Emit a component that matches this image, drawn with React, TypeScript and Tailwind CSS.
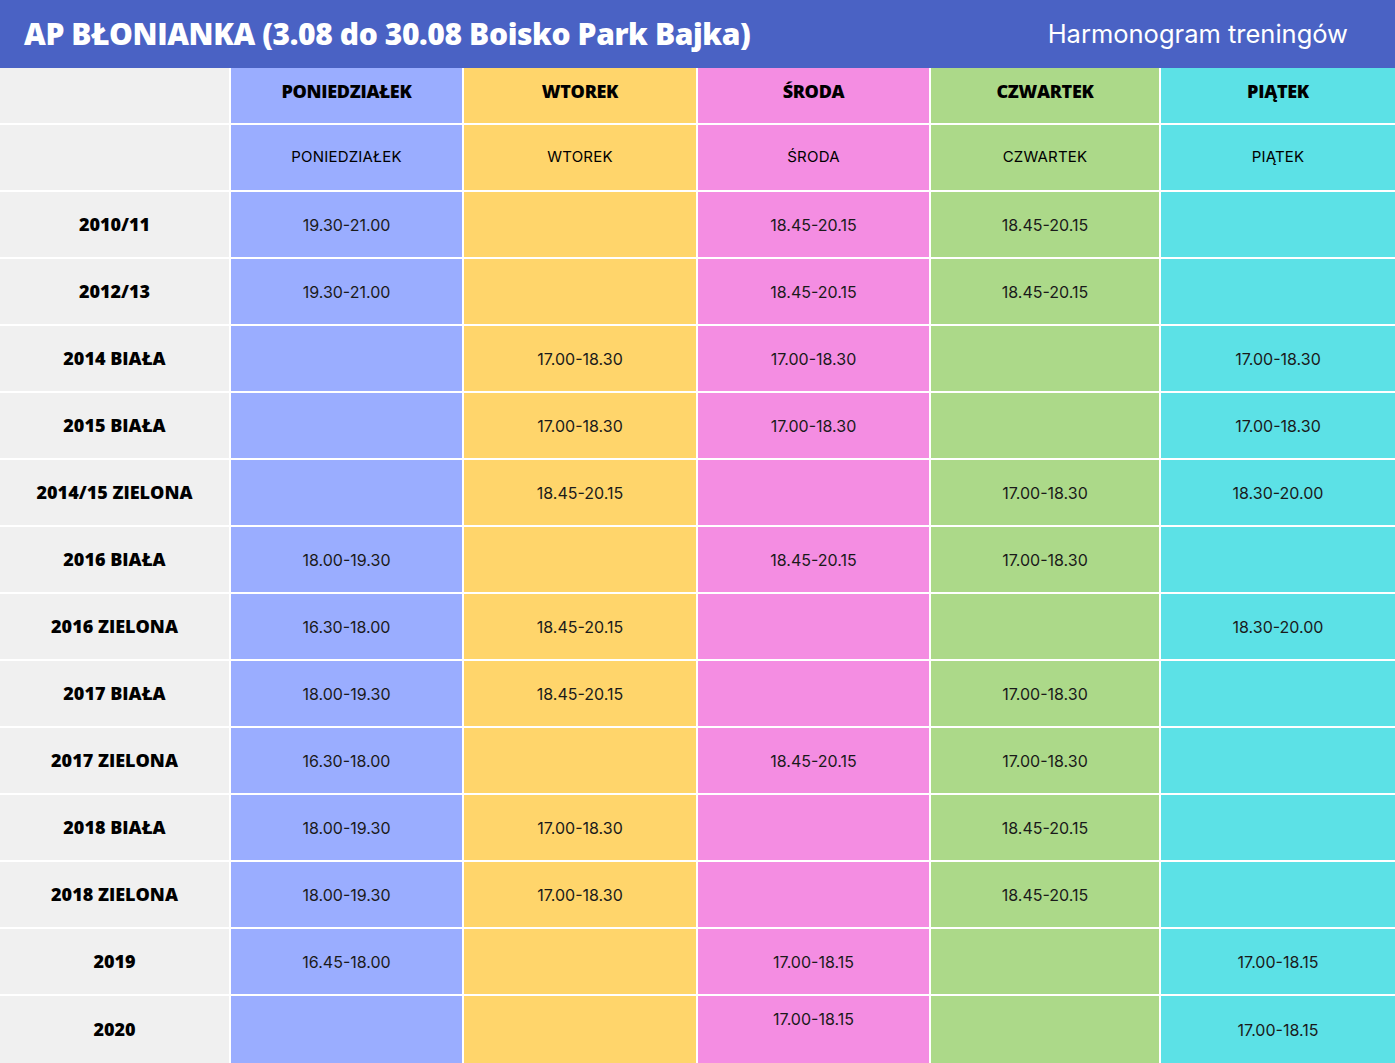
import React from "react";

const colBg = [
  "bg-[#9aadff]",
  "bg-[#ffd56b]",
  "bg-[#f48de2]",
  "bg-[#acd989]",
  "bg-[#5ce1e6]",
];

const days = ["PONIEDZIAŁEK", "WTOREK", "ŚRODA", "CZWARTEK", "PIĄTEK"];

const rows: string[][] = [
  ["2010/11", "19.30-21.00", "", "18.45-20.15", "18.45-20.15", ""],
  ["2012/13", "19.30-21.00", "", "18.45-20.15", "18.45-20.15", ""],
  ["2014 BIAŁA", "", "17.00-18.30", "17.00-18.30", "", "17.00-18.30"],
  ["2015 BIAŁA", "", "17.00-18.30", "17.00-18.30", "", "17.00-18.30"],
  ["2014/15 ZIELONA", "", "18.45-20.15", "", "17.00-18.30", "18.30-20.00"],
  ["2016 BIAŁA", "18.00-19.30", "", "18.45-20.15", "17.00-18.30", ""],
  ["2016 ZIELONA", "16.30-18.00", "18.45-20.15", "", "", "18.30-20.00"],
  ["2017 BIAŁA", "18.00-19.30", "18.45-20.15", "", "17.00-18.30", ""],
  ["2017 ZIELONA", "16.30-18.00", "", "18.45-20.15", "17.00-18.30", ""],
  ["2018 BIAŁA", "18.00-19.30", "17.00-18.30", "", "18.45-20.15", ""],
  ["2018 ZIELONA", "18.00-19.30", "17.00-18.30", "", "18.45-20.15", ""],
  ["2019", "16.45-18.00", "", "17.00-18.15", "", "17.00-18.15"],
  ["2020", "", "", "17.00-18.15", "", "17.00-18.15"],
];

export default function App() {
  return (
    <div className="w-[1395px] h-[1063px] overflow-hidden bg-white">
      <div className="h-[68px] bg-[#4a62c4] flex items-center justify-between pl-[24px] pr-[47px]">
        <div className="text-white text-[30px] font-extrabold tracking-[-0.4px] leading-none font-['Open_Sans','DejaVu_Sans',sans-serif]">
          AP BŁONIANKA (3.08 do 30.08 Boisko Park Bajka)
        </div>
        <div className="text-white text-[25.5px] font-normal leading-none font-['Inter','Liberation_Sans',sans-serif]">
          Harmonogram treningów
        </div>
      </div>
      <div className="grid grid-cols-[229px_231px_232px_231px_228px_1fr] gap-[2px] bg-white">
        <div className="h-[55px] bg-[#f0f0f0]" />
        {days.map((d, i) => (
          <div
            key={d}
            className={`h-[55px] ${colBg[i]} flex items-center justify-center pb-[9px] text-[18px] font-extrabold text-black tracking-[-0.3px] font-['Open_Sans','DejaVu_Sans',sans-serif]`}
          >
            {d}
          </div>
        ))}
        <div className="h-[65px] bg-[#f0f0f0]" />
        {days.map((d, i) => (
          <div
            key={d + "2"}
            className={`h-[65px] ${colBg[i]} flex items-center justify-center text-[15px] tracking-[0.2px] text-black font-['Inter','Liberation_Sans',sans-serif]`}
          >
            {d}
          </div>
        ))}
        {rows.map((r, ri) => {
          const last = ri === rows.length - 1;
          const h = last ? "h-[67px]" : "h-[65px]";
          return (
            <React.Fragment key={r[0]}>
              <div
                className={`${h} bg-[#f0f0f0] flex items-center justify-center text-[18px] font-extrabold text-black font-['Open_Sans','DejaVu_Sans',sans-serif]`}
              >
                {r[0]}
              </div>
              {r.slice(1).map((c, ci) => (
                <div
                  key={ci}
                  className={`${h} ${colBg[ci]} flex items-center justify-center text-[16px] text-[#1a1a1a] font-['Inter','Liberation_Sans',sans-serif] ${
                    last && ci === 2 ? "pb-[22px]" : ""
                  }`}
                >
                  {c}
                </div>
              ))}
            </React.Fragment>
          );
        })}
      </div>
    </div>
  );
}
